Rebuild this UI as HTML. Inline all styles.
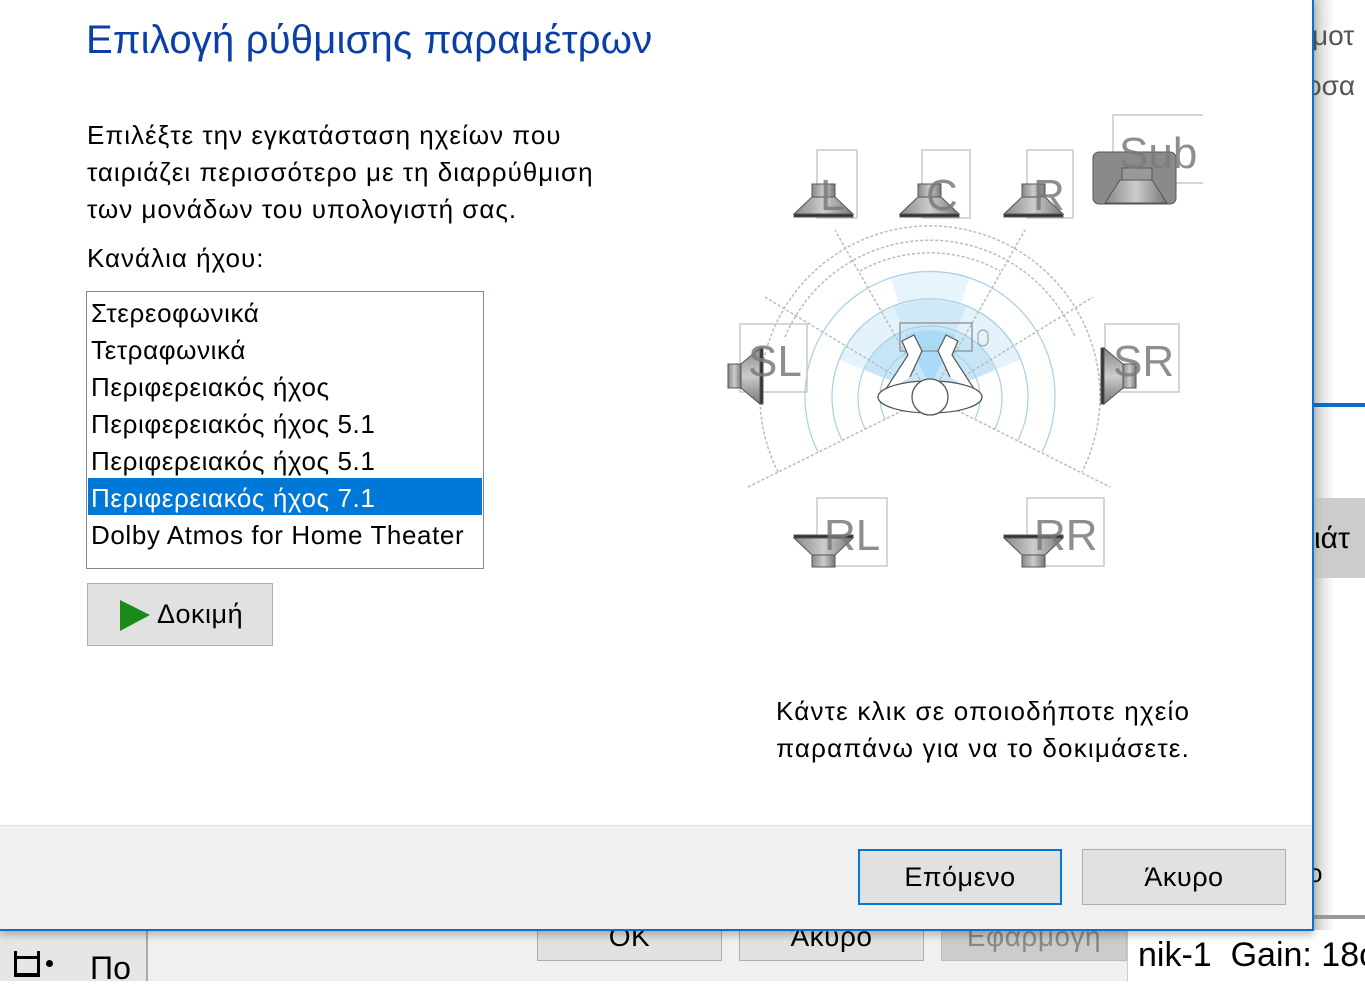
<!DOCTYPE html>
<html><head><meta charset="utf-8"><style>
*{margin:0;padding:0;box-sizing:border-box}
body{width:1365px;height:981px;overflow:hidden;position:relative;background:#fff;font-family:"Liberation Sans","DejaVu Sans",sans-serif;color:#000}
.a{position:absolute;white-space:nowrap}
.t{font-size:26px;letter-spacing:1px}
.btn{position:absolute;background:#e1e1e1;border:1px solid #adadad;font-size:27px;display:flex;align-items:center;justify-content:center;letter-spacing:0.5px}
</style></head><body>
<div class="a" style="left:1314px;top:0;width:51px;height:981px;background:#fff"></div>
<div class="a" style="left:1314px;top:0;width:20px;height:930px;background:linear-gradient(90deg,#cfcfcf,#fff)"></div>
<div class="a" style="left:1312px;top:20px;color:#555;font-size:28px">μοτ</div>
<div class="a" style="left:1306px;top:70px;color:#555;font-size:28px">οσα</div>
<div class="a" style="left:1314px;top:403px;width:51px;height:4px;background:#0a6fc9"></div>
<div class="a" style="left:1314px;top:498px;width:51px;height:80px;background:#cccccc"></div>
<div class="a" style="left:1314px;top:522px;font-size:30px">ιάτ</div>
<div class="a" style="left:1308px;top:858px;font-size:26px">ο</div>
<div class="a" style="left:1314px;top:915px;width:51px;height:4px;background:#999"></div>
<div class="a" style="left:0;top:931px;width:1365px;height:50px;background:#fff"></div>
<div class="a" style="left:0;top:931px;width:148px;height:50px;background:#e6e6e6"></div>
<div class="a" style="left:14px;top:951px;width:26px;height:26px;border:3px solid #000;border-top:none"></div>
<div class="a" style="left:14px;top:956px;width:26px;height:20px;border:3px solid #000"></div>
<div class="a" style="left:46px;top:960px;width:7px;height:7px;border-radius:50%;background:#000"></div>
<div class="a" style="left:90px;top:950px;font-size:32px">Πο</div>
<div class="a" style="left:146px;top:931px;width:982px;height:50px;background:#f0f0f0;border-left:2px solid #aaa;border-right:1px solid #ccc"></div>
<div class="btn" style="left:537px;top:912px;width:185px;height:49px;font-size:28px;align-items:flex-start;padding-top:8px">OK</div>
<div class="btn" style="left:739px;top:912px;width:185px;height:49px;font-size:28px;align-items:flex-start;padding-top:8px">Άκυρο</div>
<div class="btn" style="left:941px;top:912px;width:186px;height:49px;font-size:28px;color:#888;background:#ccc;border-color:#bbb;align-items:flex-start;padding-top:8px">Εφαρμογή</div>
<div class="a" style="left:1138px;top:936px;font-size:34px">nik-1&nbsp; Gain: 18c</div>

<div class="a" style="left:0;top:0;width:1314px;height:931px;background:#fff;border-right:2px solid #0a6fd0;border-bottom:2px solid #0a6fd0;box-shadow:0 4px 8px rgba(0,0,0,.25)"></div>
<div class="a" style="left:0;top:825px;width:1312px;height:104px;background:#f0f0f0;border-top:1px solid #dfdfdf"></div>

<div class="a" style="left:86px;top:18px;font-size:40px;color:#0a3fa6;letter-spacing:0.2px">Επιλογή ρύθμισης παραμέτρων</div>
<div class="a t" style="left:87px;top:117px;line-height:37px">Επιλέξτε την εγκατάσταση ηχείων που<br>ταιριάζει περισσότερο με τη διαρρύθμιση<br>των μονάδων του υπολογιστή σας.</div>
<div class="a t" style="left:87px;top:243px">Κανάλια ήχου:</div>

<div class="a" style="left:86px;top:291px;width:398px;height:278px;border:1px solid #828790;background:#fff"></div>
<div class="a" style="left:88px;top:478px;width:394px;height:37px;background:#0078d7"></div>
<div class="a" style="left:91px;top:295px;line-height:37px;font-size:26px;letter-spacing:0.6px">Στερεοφωνικά<br>Τετραφωνικά<br>Περιφερειακός ήχος<br>Περιφερειακός ήχος 5.1<br>Περιφερειακός ήχος 5.1<br><span style="color:#fff">Περιφερειακός ήχος 7.1</span><br>Dolby Atmos for Home Theater</div>

<div class="btn" style="left:87px;top:583px;width:186px;height:63px;justify-content:flex-start;padding-left:33px">
<svg class="a" style="left:32px;top:16px" width="32" height="32"><polygon points="0,0 30,15 0,31" fill="#1a8a1a"/></svg>
<span style="margin-left:36px">Δοκιμή</span></div>

<div class="a t" style="left:776px;top:693px;line-height:37px;text-align:center;letter-spacing:1.2px">Κάντε κλικ σε οποιοδήποτε ηχείο<br>παραπάνω για να το δοκιμάσετε.</div>

<div class="btn" style="left:858px;top:849px;width:204px;height:56px;border:2px solid #0078d7">Επόμενο</div>
<div class="btn" style="left:1082px;top:849px;width:204px;height:56px">Άκυρο</div>

<svg class="a" style="left:0;top:0" width="1314" height="825">
<defs>
<linearGradient id="g" x1="0" x2="1"><stop offset="0" stop-color="#888"/><stop offset=".5" stop-color="#ccc"/><stop offset="1" stop-color="#777"/></linearGradient>
<linearGradient id="gv" x1="0" y1="0" x2="0" y2="1"><stop offset="0" stop-color="#888"/><stop offset=".5" stop-color="#ccc"/><stop offset="1" stop-color="#777"/></linearGradient>
</defs>
<g transform="translate(930,397)">
<path d="M0,0 L-92,-38 A100,100 0 0 1 92,-38 Z" fill="#e3f2fb"/>
<path d="M0,0 L-40,-120 A127,127 0 0 1 40,-120 Z" fill="#e8f4fc"/>
<path d="M0,0 L-36,-90 A97,97 0 0 1 36,-90 Z" fill="#cfe9f9"/>
<path d="M0,0 L-65,-27 A70,70 0 0 1 65,-27 Z" fill="#c6e6f8"/>
<path d="M0,-10 L-25,-62 A68,68 0 0 1 25,-62 Z" fill="#a9dbf6"/>
<g fill="none" stroke="#a9cfe6" stroke-width="1.2">
<path d="M-45,22 A50,50 0 1 1 45,22"/>
<path d="M-65,32 A72,72 0 1 1 65,32"/>
<path d="M-88,43 A98,98 0 1 1 88,43"/>
<path d="M-112,55 A125,125 0 1 1 112,55"/>
</g>
<g fill="none" stroke="#bbb" stroke-width="1.5" stroke-dasharray="3,2">
<path d="M-152,75 A170,170 0 1 1 152,75"/>
<path d="M-145,-60 A157,157 0 0 1 145,-60"/>
<path d="M-70,-126 A144,144 0 0 1 70,-126"/>
<line x1="0" y1="0" x2="-95" y2="-167"/><line x1="0" y1="0" x2="95" y2="-167"/>
<line x1="0" y1="0" x2="-165" y2="-100"/><line x1="0" y1="0" x2="163" y2="-100"/>
<line x1="0" y1="0" x2="-182" y2="90"/><line x1="0" y1="0" x2="180" y2="90"/>
</g>
<rect x="-30" y="-74" width="72" height="28" fill="none" stroke="#999" stroke-width="1.5"/>
<rect x="48" y="-67" width="10" height="16" rx="5" fill="none" stroke="#999"/>
<path d="M-48,-2 L-22,-42 L-28,-56 L-16,-62 L-8,-46 L-20,-20" fill="#fff" stroke="#555" stroke-width="1.2"/>
<path d="M48,-2 L22,-42 L28,-56 L16,-62 L8,-46 L20,-20" fill="#fff" stroke="#555" stroke-width="1.2"/>
<ellipse cx="0" cy="0" rx="52" ry="16" fill="#fff" stroke="#555" stroke-width="1.3"/>
<circle cx="0" cy="0" r="18" fill="#fff" stroke="#555" stroke-width="1.3"/>
</g>
<g fill="none" stroke="#c8c8c8" stroke-width="1.5">
<rect x="817" y="150" width="40" height="68"/><rect x="922" y="150" width="48" height="68"/><rect x="1027" y="150" width="46" height="68"/>
<path d="M1203,115 H1113 V183 H1203"/>
<rect x="740" y="324" width="67" height="68"/><rect x="1105" y="324" width="74" height="68"/>
<rect x="817" y="498" width="70" height="68"/><rect x="1027" y="498" width="77" height="68"/>
</g>
<g fill="url(#g)" stroke="#555" stroke-width="1">
<rect x="812" y="184" width="23" height="13"/><polygon points="812,197 835,197 853,214 794,214"/><rect x="794" y="214" width="59" height="3" fill="#333"/>
<rect x="918" y="184" width="23" height="13"/><polygon points="918,197 941,197 959,214 900,214"/><rect x="900" y="214" width="59" height="3" fill="#333"/>
<rect x="1022" y="184" width="23" height="13"/><polygon points="1022,197 1045,197 1063,214 1004,214"/><rect x="1004" y="214" width="59" height="3" fill="#333"/>
<rect x="1093" y="152" width="83" height="52" rx="6" fill="#8a8a8a"/>
<rect x="1122" y="168" width="30" height="12" fill="#999"/>
<polygon points="1120,180 1152,180 1167,203 1105,203"/>
<rect x="728" y="364" width="13" height="24"/><polygon points="741,364 741,388 760,404 760,348" fill="url(#gv)"/><rect x="760" y="348" width="3" height="56" fill="#333"/>
<rect x="1123" y="364" width="13" height="24"/><polygon points="1123,364 1123,388 1104,404 1104,348" fill="url(#gv)"/><rect x="1101" y="348" width="3" height="56" fill="#333"/>
<rect x="794" y="535" width="59" height="3" fill="#333"/><polygon points="794,538 853,538 835,555 812,555"/><rect x="812" y="555" width="23" height="12"/>
<rect x="1004" y="535" width="59" height="3" fill="#333"/><polygon points="1004,538 1063,538 1045,555 1022,555"/><rect x="1022" y="555" width="23" height="12"/>
</g>
<g font-family="Liberation Sans, sans-serif" font-size="44" fill="#7d7a74" fill-opacity=".85">
<text x="820" y="210">L</text><text x="926" y="210">C</text><text x="1033" y="210">R</text>
<text x="1119" y="168">Sub</text>
<text x="748" y="376">SL</text><text x="1113" y="376">SR</text>
<text x="824" y="550">RL</text><text x="1034" y="550">RR</text>
</g>
</svg>
</body></html>
